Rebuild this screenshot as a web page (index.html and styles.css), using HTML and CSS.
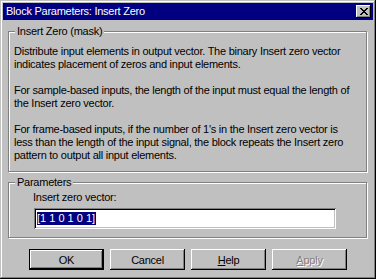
FILE: index.html
```html
<!DOCTYPE html>
<html lang="en">

<head>
    <meta charset="UTF-8">
    <title>Block Parameters: Insert Zero</title>
    <link rel="stylesheet" href="styles.css">
</head>

<body>
    <div class="window">
        <!-- title bar -->
        <div class="titlebar">
            <span class="title">Block Parameters: Insert Zero</span>
            <span class="close">
                <svg width="8" height="7" viewBox="0 0 8 7" shape-rendering="crispEdges">
                    <path d="M0 0h2v1h-2zM6 0h2v1h-2zM1 1h2v1h-2zM5 1h2v1h-2zM2 2h4v1h-4zM3 3h2v1h-2zM2 4h4v1h-4zM1 5h2v1h-2zM5 5h2v1h-2zM0 6h2v1h-2zM6 6h2v1h-2z" fill="#000"/>
                </svg>
            </span>
        </div>

        <div class="content">
            <!-- mask description -->
            <fieldset class="group mask">
                <legend>Insert Zero (mask)</legend>
                <p>Distribute input elements in output vector. The binary Insert zero vector<br>indicates placement of zeros and input elements.</p>
                <p>For sample-based inputs, the length of the input must equal the length of<br>the Insert zero vector.</p>
                <p>For frame-based inputs, if the number of 1's in the Insert zero vector is<br>less than the length of the input signal, the block repeats the Insert zero<br>pattern to output all input elements.</p>
            </fieldset>

            <!-- parameters -->
            <fieldset class="group params">
                <legend>Parameters</legend>
                <div class="label">Insert zero vector:</div>
                <div class="field"><span class="sel">[1 1 0 1 0 1]</span><span class="caret"></span></div>
            </fieldset>

            <div class="buttons">
                <button class="btn default">OK</button>
                <button class="btn">Cancel</button>
                <button class="btn"><u>H</u>elp</button>
                <button class="btn disabled"><u>A</u>pply</button>
            </div>
        </div>
    </div>
</body>

</html>
```

FILE: styles.css
```css
* {
    margin: 0;
    padding: 0;
    box-sizing: border-box;
}

body {
    background-color: #c0c0c0;
    font-family: "Liberation Sans", Arial, sans-serif;
    font-size: 11px;
    line-height: 13px;
    letter-spacing: -0.25px;
    color: #000;
}

.window {
    width: 376px;
    height: 279px;
    padding: 3px;
    background-color: #c0c0c0;
    box-shadow: inset -1px -1px 0 #000, inset 1px 1px 0 #c0c0c0, inset -2px -2px 0 #808080, inset 2px 2px 0 #fff;
}

/* title bar */

.titlebar {
    display: flex;
    align-items: center;
    justify-content: space-between;
    height: 17px;
    padding: 0 2px 0 3px;
    background-color: #000080;
    color: #fff;
}

.close {
    display: flex;
    align-items: center;
    justify-content: center;
    width: 15px;
    height: 13px;
    background-color: #c0c0c0;
    box-shadow: inset -1px -1px 0 #000, inset 1px 1px 0 #fff, inset -2px -2px 0 #808080;
}

/* groups */

.content {
    padding: 0 5px;
}

.group {
    border: 1px solid #808080;
    box-shadow: 1px 1px 0 #fff, inset 1px 1px 0 #fff;
    width: 359px;
}

.group legend {
    margin-left: 1px;
    padding: 0 2px;
    background-color: #c0c0c0;
}

.mask {
    margin-top: 5px;
    padding: 7px 5px 9px 5px;
}

.mask p {
    margin-bottom: 13px;
    white-space: nowrap;
}

.mask p:last-child {
    margin-bottom: 0;
}

.params {
    margin-top: 4px;
    padding: 2px 5px 8px 5px;
}

.label {
    margin-left: 19px;
}

.field {
    display: flex;
    align-items: center;
    width: 302px;
    height: 21px;
    margin: 4px 0 0 20px;
    padding: 0 3px;
    background-color: #fff;
    box-shadow: inset 1px 1px 0 #808080, inset -1px -1px 0 #fff, inset 2px 2px 0 #000, inset -2px -2px 0 #c0c0c0;
}

.sel {
    background-color: #000080;
    color: #fff;
    height: 13px;
    letter-spacing: 0;
}

.caret {
    width: 1px;
    height: 13px;
    background-color: #000;
}

/* buttons */

.buttons {
    display: flex;
    justify-content: center;
    gap: 6px;
    margin-top: 11px;
}

.btn {
    width: 75px;
    height: 21px;
    border: none;
    background-color: #c0c0c0;
    font-family: inherit;
    font-size: 11px;
    letter-spacing: inherit;
    color: #000;
    box-shadow: inset -1px -1px 0 #000, inset 1px 1px 0 #fff, inset -2px -2px 0 #808080;
}

.btn u {
    text-decoration: underline;
}

.default {
    box-shadow: inset 0 0 0 1px #000, inset -2px -2px 0 #000, inset 2px 2px 0 #fff, inset -3px -3px 0 #808080;
}

.disabled {
    color: #808080;
    text-shadow: 1px 1px 0 #fff;
}
```
